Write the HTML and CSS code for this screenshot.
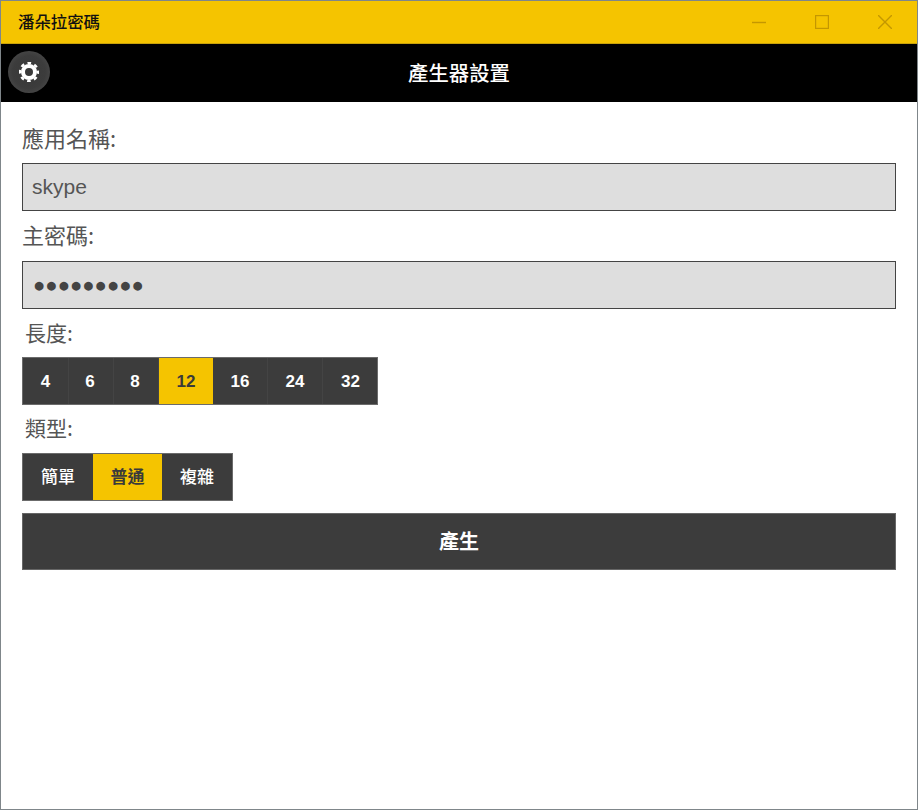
FILE: index.html
```html
<!DOCTYPE html>
<html lang="zh-Hant">
<head>
<meta charset="utf-8">
<title>潘朵拉密碼</title>
<link rel="stylesheet" href="styles.css">
</head>
<body>
<div class="window">
  <div class="titlebar">
    <span class="title">潘朵拉密碼</span>
    <div class="controls">
      <svg class="ctl" width="14" height="14" viewBox="0 0 14 14"><path d="M0 7.5H14" /></svg>
      <svg class="ctl" width="14" height="14" viewBox="0 0 14 14"><rect x="0.5" y="0.5" width="13" height="13" /></svg>
      <svg class="ctl" width="14" height="14" viewBox="0 0 14 14"><path d="M0 0L14 14M14 0L0 14" /></svg>
    </div>
  </div>
  <header class="appbar">
    <button class="gear" aria-label="設置">
      <svg width="20" height="20" viewBox="0 0 20 20"><circle class="gear-ring" cx="10" cy="10" r="6" /><circle class="gear-teeth" cx="10" cy="10" r="9" /></svg>
    </button>
    <h1 class="apptitle">產生器設置</h1>
  </header>
  <main class="content">
    <label class="label">應用名稱:</label>
    <div class="field">skype</div>
    <label class="label">主密碼:</label>
    <div class="field dots">●●●●●●●●●</div>
    <label class="label small">長度:</label>
    <div class="seg num">
      <span class="item">4</span><span class="item">6</span><span class="item">8</span><span class="item on">12</span><span class="item">16</span><span class="item">24</span><span class="item">32</span>
    </div>
    <label class="label small">類型:</label>
    <div class="seg type">
      <span class="item">簡單</span><span class="item on">普通</span><span class="item">複雜</span>
    </div>
    <button class="generate">產生</button>
  </main>
</div>
</body>
</html>
```
FILE: styles.css
```css
* { box-sizing: border-box; }
html, body { margin: 0; padding: 0; }
body { background: #fff; font-family: "Liberation Sans", "Noto Sans CJK TC", sans-serif; }
.window { width: 918px; height: 810px; border: 1px solid #7f868a; display: flex; flex-direction: column; background: #fff; }
.titlebar { height: 43px; background: #f5c400; border-bottom: 1px solid #c9a20a; display: flex; align-items: center; justify-content: space-between; padding-left: 17px; flex: none; }
.title { font-size: 16.4px; font-weight: 500; color: #111; font-family: "Noto Sans CJK TC", sans-serif; position: relative; top: -1px; }
.controls { display: flex; gap: 49px; padding-right: 25px; }
.ctl { display: block; fill: none; stroke: #c49700; stroke-width: 1.4; }
.appbar { height: 58px; background: #000; position: relative; display: flex; align-items: center; justify-content: center; flex: none; }
.apptitle { margin: 0; font-size: 20.4px; font-weight: 500; color: #fff; font-family: "Noto Sans CJK TC", sans-serif; position: relative; top: -1px; }
.gear { position: absolute; left: 7px; top: 7px; width: 42px; height: 42px; border-radius: 50%; border: 0; padding: 0; background: radial-gradient(circle, #383838 0%, #3c3c3c 55%, #4a4a4a 82%, #2a2a2a 100%); display: flex; align-items: center; justify-content: center; }
.gear-ring { fill: none; stroke: #fff; stroke-width: 4; }
.gear-teeth { fill: none; stroke: #fff; stroke-width: 2.4; stroke-dasharray: 3.6 3.469; stroke-dashoffset: 1.8; }
.content { padding: 0 21px; display: flex; flex-direction: column; }
.label { display: block; font-family: "Noto Sans CJK TC", sans-serif; font-size: 22px; line-height: 30px; color: #555; height: 30px; margin-top: 20px; }
.field { height: 48px; background: #dedede; border: 1px solid #444; margin-top: 11px; padding-left: 9px; font-size: 21px; line-height: 46px; color: #555; }
.field + .label { margin-top: 8px; }
.field.dots { font-size: 20.4px; color: #444; padding-left: 10px; margin-top: 12px; }
.field.dots + .label.small { margin-top: 8px; }
.label.small { padding-left: 3px; font-size: 21px; }
.seg { display: flex; height: 48px; margin-top: 10px; background: #3c3c3c; border: 1px solid #6b6b6b; align-self: flex-start; }
.item { display: flex; align-items: center; justify-content: center; color: #fff; font-weight: 700; font-size: 17px; }
.num .item { width: 45px; border-right: 1px solid #444; padding-top: 2px; }
.num .item:first-child { width: 46px; }
.num .item:nth-child(2), .num .item:nth-child(3) { padding-right: 2px; }
.num .item.on { width: 54px; }
.num .item:nth-child(n+5) { width: 55px; }
.num .item:last-child { border-right: 0; width: 54px; padding-left: 1px; }
.type .item { width: 70px; font-family: "Noto Sans CJK TC", sans-serif; font-size: 17px; font-weight: 500; padding-bottom: 3px; }
.type .item.on { width: 69px; font-weight: 700; }
.item.on { background: #f5c400; color: #3a3a3a; border: 0; }
.seg + .label.small { margin-top: 7px; }
.seg + .label.small + .seg { margin-top: 11px; }
.generate { height: 57px; margin-top: 12px; background: #3c3c3c; border: 1px solid #666; color: #fff; font-family: "Noto Sans CJK TC", sans-serif; font-weight: 700; font-size: 20px; padding: 0 0 2px; }
```
